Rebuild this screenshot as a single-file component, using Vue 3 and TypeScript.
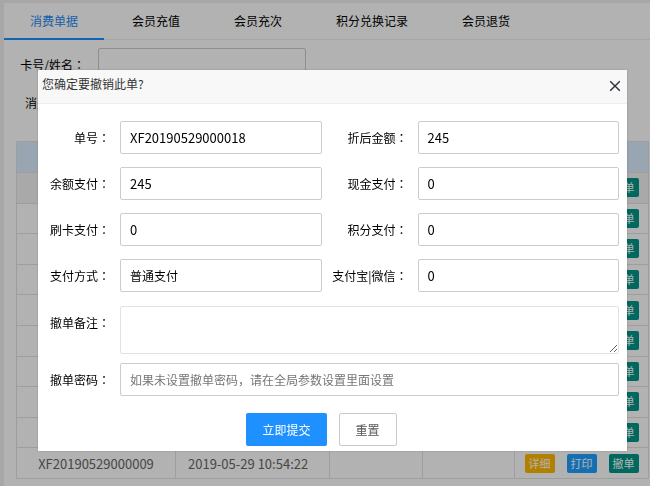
<script setup lang="ts">
import { ref } from 'vue'

interface Field {
  id: string
  label: string
  value: string
  words?: boolean
}

const tabs: string[] = ['消费单据', '会员充值', '会员充次', '积分兑换记录', '会员退货']
const activeTab = ref(0)
const dialogOpen = ref(true)

const cardNo = ref('')
const spendDate = ref('')

const orders = Array.from({ length: 10 }, (_, i) => ({
  no: `XF201905290000${String(18 - i).padStart(2, '0')}`,
  time: '2019-05-29 10:54:22',
}))

const initialFields: Field[] = [
  { id: 'order-no', label: '单号', value: 'XF20190529000018' },
  { id: 'discounted', label: '折后金额', value: '245' },
  { id: 'balance', label: '余额支付', value: '245' },
  { id: 'cash', label: '现金支付', value: '0' },
  { id: 'card', label: '刷卡支付', value: '0' },
  { id: 'points', label: '积分支付', value: '0' },
  { id: 'method', label: '支付方式', value: '普通支付', words: true },
  { id: 'mobile', label: '支付宝|微信', value: '0' },
]

const fields = ref<Field[]>(initialFields.map((f) => ({ ...f })))
const remark = ref('')
const password = ref('')

function reset(): void {
  fields.value = initialFields.map((f) => ({ ...f }))
  remark.value = ''
  password.value = ''
}
</script>

<template>
  <div class="page">
    <main class="card">
      <nav class="tabs">
        <button
          v-for="(tab, i) in tabs"
          :key="tab"
          type="button"
          class="tab"
          :class="{ active: i === activeTab }"
          @click="activeTab = i"
        >
          {{ tab }}
        </button>
      </nav>

      <div class="search">
        <label for="card-no">卡号/姓名<span class="colon">：</span></label>
        <input id="card-no" v-model="cardNo" class="control" type="text" />
        <label for="spend-date">消费时间<span class="colon">：</span></label>
        <input id="spend-date" v-model="spendDate" class="control" type="text" />
      </div>

      <table class="orders">
        <colgroup>
          <col class="col-no" />
          <col class="col-time" />
          <col />
          <col />
          <col class="col-actions" />
        </colgroup>
        <thead>
          <tr>
            <th></th>
            <th></th>
            <th></th>
            <th></th>
            <th></th>
          </tr>
        </thead>
        <tbody>
          <tr v-for="order in orders" :key="order.no">
            <td>{{ order.no }}</td>
            <td class="time">{{ order.time }}</td>
            <td></td>
            <td></td>
            <td>
              <div class="actions">
                <button type="button" class="mini detail">详细</button>
                <button type="button" class="mini print">打印</button>
                <button type="button" class="mini revoke" @click="dialogOpen = true">撤单</button>
              </div>
            </td>
          </tr>
        </tbody>
      </table>
    </main>

    <div v-if="dialogOpen" class="shade">
      <section class="dialog" role="dialog" aria-labelledby="dialog-title">
        <header class="dialog-head">
          <h2 id="dialog-title">您确定要撤销此单?</h2>
          <button type="button" class="close" aria-label="关闭" @click="dialogOpen = false">
            <svg viewBox="0 0 12 12" width="12" height="12">
              <path d="M1.2 1.2 L10.8 10.8 M10.8 1.2 L1.2 10.8" />
            </svg>
          </button>
        </header>

        <form class="form" @submit.prevent="dialogOpen = false">
          <div class="pairs">
            <template v-for="field in fields" :key="field.id">
              <label :for="field.id">{{ field.label }}<span class="colon">：</span></label>
              <input
                :id="field.id"
                v-model="field.value"
                class="control"
                :class="{ words: field.words }"
                type="text"
              />
            </template>
          </div>
          <div class="wide">
            <label for="remark">撤单备注<span class="colon">：</span></label>
            <textarea id="remark" v-model="remark" class="control"></textarea>
            <label for="password">撤单密码<span class="colon">：</span></label>
            <input
              id="password"
              v-model="password"
              class="control words"
              type="password"
              placeholder="如果未设置撤单密码，请在全局参数设置里面设置"
            />
          </div>
          <div class="buttons">
            <button type="submit" class="btn primary">立即提交</button>
            <button type="button" class="btn" @click="reset">重置</button>
          </div>
        </form>
      </section>
    </div>
  </div>
</template>

<style>
body {
  margin: 0;
  background: #fff;
}
</style>

<style scoped>
.page {
  min-height: 100vh;
  box-sizing: border-box;
  padding: 3px 0 0 4px;
  overflow: hidden;
  background: #f0f0f0;
  color: #000;
  font-family: 'Noto Sans CJK SC', 'Noto Sans', sans-serif;
  font-size: 12px;
}

button,
input,
textarea {
  box-sizing: border-box;
  margin: 0;
  font-family: inherit;
  font-size: 12px;
  color: inherit;
}

button {
  cursor: pointer;
}

/* The TC face centres the full-width colon in its box. */
.colon {
  font-family: 'Noto Sans CJK TC', sans-serif;
}

.card {
  min-height: calc(100vh - 3px);
  background: #fff;
}

.tabs {
  display: flex;
  gap: 2px;
  height: 36px;
  border-bottom: 1px solid #f0f0f0;
}

.tab {
  height: 37px;
  padding: 0 26px;
  border: 0;
  border-bottom: 2px solid transparent;
  background: none;
}

.tab.active {
  border-bottom-color: #1e90ff;
  color: #1e88f5;
}

.search {
  display: grid;
  grid-template-columns: 72px 208px;
  column-gap: 13px;
  row-gap: 5px;
  align-items: center;
  padding: 8px 0 7px 9px;
}

.search label {
  text-align: right;
  white-space: nowrap;
}

.control {
  width: 100%;
  height: 33px;
  padding: 0 9px;
  border: 1px solid #ccc;
  border-radius: 2px;
  background: #fff;
  outline: none;
  font-size: 13px;
}

.words {
  font-size: 12px;
}

.words::placeholder {
  color: #757575;
}

.orders {
  width: calc(100% - 13px);
  height: 338px;
  margin: 15px 1px 0 12px;
  border-collapse: collapse;
  table-layout: fixed;
  color: #666;
  font-size: 13px;
}

.col-no {
  width: 159px;
}

.col-time {
  width: 154px;
}

.col-actions {
  width: 134px;
}

.orders th,
.orders td {
  padding: 0;
  border: 1px solid #e2e2e2;
  line-height: 19px;
  font-weight: 400;
  text-align: center;
}

.orders th {
  height: 30px;
  background: #dbeeff;
}

.orders .time {
  padding-left: 12px;
  text-align: left;
}

.orders tbody tr:first-child {
  background: #f2f2f2;
}

.actions {
  display: flex;
  justify-content: center;
  gap: 12px;
}

.mini {
  width: 30px;
  height: 19px;
  padding: 0;
  border: 0;
  border-radius: 2px;
  color: #fff;
  font-size: 11px;
  line-height: 19px;
}

.detail {
  background: #ffb800;
}

.print {
  background: #1e9fff;
}

.revoke {
  background: #009688;
}

.shade {
  position: fixed;
  inset: 0;
  display: flex;
  align-items: flex-start;
  padding: 70px 23px 0 38px;
  background: rgba(0, 0, 0, 0.3);
}

.dialog {
  flex: 1;
  background: #fff;
  box-shadow: 0 0 2px rgba(0, 0, 0, 0.2);
}

.dialog-head {
  display: flex;
  align-items: center;
  justify-content: space-between;
  height: 31px;
  padding: 0 6px 2px 4px;
  border-bottom: 1px solid #eee;
  background: #f8f8f8;
}

.dialog-head h2 {
  margin: 0;
  padding-bottom: 4px;
  color: #333;
  font-size: 12px;
  font-weight: 400;
  line-height: 18px;
}

.close {
  display: flex;
  padding: 0;
  border: 0;
  background: none;
}

.close svg {
  fill: none;
  stroke: #2d2c3b;
  stroke-width: 1.4;
}

.form {
  padding: 17px 8px 5px 12px;
}

.pairs {
  display: grid;
  grid-template-columns: 60px 1fr 76px 1fr;
  column-gap: 10px;
  row-gap: 13px;
  align-items: center;
}

.wide {
  display: grid;
  grid-template-columns: 60px 1fr;
  column-gap: 10px;
  row-gap: 9px;
  margin-top: 14px;
}

.form label {
  line-height: 33px;
  text-align: right;
  white-space: nowrap;
}

textarea.control {
  display: block;
  height: 48px;
  border-color: #e2e2e2;
  resize: vertical;
}

.buttons {
  display: flex;
  justify-content: center;
  gap: 12px;
  padding: 17px 26px 0 0;
}

.btn {
  height: 33px;
  padding: 0 16px;
  border: 1px solid #c9c9c9;
  border-radius: 2px;
  background: #fff;
  color: #555;
}

.btn.primary {
  border: 0;
  background: #1e90ff;
  color: #fff;
}
</style>
